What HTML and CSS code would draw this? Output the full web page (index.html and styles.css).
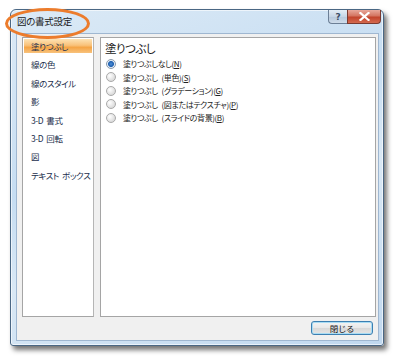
FILE: index.html
```html
<!DOCTYPE html>
<html>
<head>
  <title>図の書式設定</title>
  <link rel="stylesheet" href="styles.css">
</head>
<body>
  <div class="window">
    <div class="titlebar">
      <span class="title">図の書式設定</span>
      <div class="caption-buttons">
        <span class="btn-help">?</span>
        <span class="btn-close">
          <svg width="11" height="9" viewBox="0 0 11 9"><path d="M1.5 1 L9.5 8 M9.5 1 L1.5 8" stroke="#fff" stroke-width="2.2" stroke-linecap="square"/></svg>
        </span>
      </div>
    </div>

    <div class="client">
      <div class="panes">
        <ul class="nav-list">
          <li class="nav-item selected">塗りつぶし</li>
          <li class="nav-item">線の色</li>
          <li class="nav-item">線のスタイル</li>
          <li class="nav-item">影</li>
          <li class="nav-item">3-D 書式</li>
          <li class="nav-item">3-D 回転</li>
          <li class="nav-item">図</li>
          <li class="nav-item">テキスト ボックス</li>
        </ul>

        <div class="content">
          <div class="heading">塗りつぶし</div>
          <label class="option"><span class="radio checked"></span>塗りつぶしなし(<u>N</u>)</label>
          <label class="option"><span class="radio"></span>塗りつぶし (単色)(<u>S</u>)</label>
          <label class="option"><span class="radio"></span>塗りつぶし (グラデーション)(<u>G</u>)</label>
          <label class="option"><span class="radio"></span>塗りつぶし (図またはテクスチャ)(<u>P</u>)</label>
          <label class="option"><span class="radio"></span>塗りつぶし (スライドの背景)(<u>B</u>)</label>
        </div>
      </div>

      <div class="footer">
        <button class="close-button">閉じる</button>
      </div>
    </div>
  </div>

  <!-- orange highlight around the title -->
  <div class="highlight"></div>
</body>
</html>
```

FILE: styles.css
```css
body {
  margin: 0;
  width: 400px;
  height: 360px;
  background-color: #ffffff;
  font-family: "Noto Sans CJK JP", "Noto Sans", sans-serif;
  font-feature-settings: "palt";
  position: relative;
  overflow: hidden;
}

.window {
  margin: 9px 0 0 10px;
  width: 374px;
  height: 337px;
  box-sizing: border-box;
  border: 1px solid #4a6784;
  border-radius: 6px 6px 3px 3px;
  background: linear-gradient(160deg, #dceaf6 0%, #c6ddf2 40%, #d9e8f5 60%, #c0d8ef 100%);
  box-shadow: 3px 4px 5px rgba(0, 0, 0, 0.55), inset 0 0 0 1px rgba(255, 255, 255, 0.6);
  display: flex;
  flex-direction: column;
}

.titlebar {
  height: 23px;
  display: flex;
  justify-content: space-between;
  align-items: flex-start;
  padding-left: 6px;
}

.title {
  font-size: 9.5px;
  letter-spacing: -0.3px;
  color: #1a1a1a;
  margin-top: 5px;
  line-height: 12px;
}

.caption-buttons {
  display: flex;
  margin-right: 2px;
}

.btn-help,
.btn-close {
  height: 14px;
  box-sizing: border-box;
  border: 1px solid #6c7f96;
  border-top: none;
  display: flex;
  justify-content: center;
  align-items: center;
}

.btn-help {
  width: 19px;
  border-radius: 0 0 0 4px;
  border-right: none;
  background: linear-gradient(#e4edf6, #c7d6e6 50%, #b6c8dc 51%, #cfdcea);
  color: #3b4f66;
  font-family: "DejaVu Sans", sans-serif;
  font-size: 9px;
  font-weight: bold;
}

.btn-close {
  width: 34px;
  border-radius: 0 0 4px 0;
  border-color: #7a3a30;
  background: linear-gradient(#e8a89b, #d47561 45%, #c2442c 55%, #d46a4f);
}

.client {
  flex: 1;
  margin: 0 4px 4px 5px;
  background-color: #f0f0f0;
  border: 1px solid #9fb7d1;
  display: flex;
  flex-direction: column;
  padding: 3px 2px 0 5px;
}

.panes {
  display: flex;
  gap: 6px;
  height: 280px;
}

.nav-list {
  list-style: none;
  margin: 0;
  padding: 1px;
  width: 72px;
  box-sizing: border-box;
  background-color: #ffffff;
  border: 1px solid #a5a5a5;
  border-right-color: #b5b5b5;
  display: flex;
  flex-direction: column;
  gap: 4.4px;
}

.nav-item {
  height: 14px;
  line-height: 14px;
  padding-left: 7px;
  font-size: 8.5px;
  letter-spacing: -0.4px;
  word-spacing: 1.5px;
  color: #1c2f4d;
  white-space: nowrap;
}

.nav-item.selected {
  background: linear-gradient(#fde3b5, #f9c27a 45%, #f5a546 60%, #f8c27c);
}

.content {
  flex: 1;
  background-color: #ffffff;
  border: 1px solid #a5a5a5;
  padding: 2px 4px;
  display: flex;
  flex-direction: column;
}

.heading {
  font-size: 11.5px;
  letter-spacing: -0.5px;
  line-height: 16px;
  color: #1a1a1a;
  margin-bottom: 1px;
}

.option {
  display: flex;
  align-items: center;
  height: 13.5px;
  font-size: 8px;
  letter-spacing: -0.4px;
  word-spacing: 2.5px;
  color: #222222;
  white-space: pre;
}

.option u {
  text-underline-offset: 1px;
}

.radio {
  width: 8px;
  height: 8px;
  border-radius: 50%;
  border: 1px solid #a9a9a9;
  background: radial-gradient(circle at 35% 35%, #ffffff, #dcdcdc 70%);
  margin: 0 7px 0 1px;
  flex: 0 0 auto;
}

.radio.checked {
  background: radial-gradient(circle, #4f8fd6 0, #1d5fb0 2.5px, #e6eef7 3.5px, #d9e3ee 100%);
  border-color: #8b9aab;
}

.footer {
  display: flex;
  justify-content: flex-end;
  padding: 4px 3px 0 0;
}

.close-button {
  width: 62px;
  height: 14px;
  padding: 0;
  border: 1px solid #3c7fb1;
  border-radius: 3px;
  background: linear-gradient(#f4f4f4, #e8e8e8 50%, #d8d8d8 51%, #e4e4e4);
  box-shadow: inset 0 0 0 1px #a8dcf4;
  font-family: inherit;
  font-size: 8.5px;
  letter-spacing: -0.3px;
  color: #1a1a1a;
  line-height: 12px;
}

.highlight {
  position: absolute;
  left: 5px;
  top: 8px;
  width: 79px;
  height: 25px;
  border: 3px solid #ec7c2c;
  border-radius: 50%;
}
```
